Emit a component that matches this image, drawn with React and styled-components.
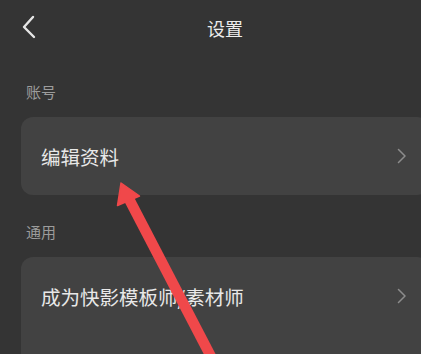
import React from 'react';
import styled, { createGlobalStyle } from 'styled-components';

const GlobalStyle = createGlobalStyle`
    html, body {
        margin: 0;
        padding: 0;
        background: #343434;
        overflow: hidden;
    }
    body {
        font-family: "Noto Sans CJK SC", "Noto Sans", sans-serif;
    }
`;

const Screen = styled.div`
    position: relative;
    width: 450px;
    height: 354px;
    overflow: hidden;
    background: #343434;
`;

const Header = styled.header`
    height: 55px;
    display: grid;
    grid-template-columns: 1fr auto 1fr;
    align-items: center;
`;

const BackButton = styled.div`
    display: flex;
    align-items: center;
    padding-left: 22px;
    margin-top: -1px;
`;

const Title = styled.h1`
    margin: 0;
    font-size: 18px;
    font-weight: 400;
    line-height: 1;
    color: #ececec;
`;

const SectionTitle = styled.div`
    height: 62px;
    box-sizing: border-box;
    padding: 0 26px 17px;
    display: flex;
    align-items: flex-end;
    font-size: 15px;
    line-height: 16px;
    color: #9c9c9c;
`;

const Card = styled.div`
    margin: 0 21px;
    min-height: ${(p) => p.$minHeight || 0}px;
    background: #424242;
    border-radius: 12px;
    overflow: hidden;
`;

const Row = styled.div`
    height: 78px;
    box-sizing: border-box;
    display: flex;
    align-items: center;
    justify-content: space-between;
    padding: 0 23px 0 20px;
    font-size: 19.5px;
    color: #e8e8e8;
`;

const Annotation = styled.svg`
    position: absolute;
    top: 0;
    left: 0;
    pointer-events: none;
`;

function ChevronLeft() {
    return (
        <svg width="14" height="24" viewBox="0 0 14 24">
            <polyline points="11,2 2,12 12,22" fill="none" stroke="#e6e6e6" strokeWidth="2.4" strokeLinecap="round" strokeLinejoin="round" />
        </svg>
    );
}

function ChevronRight() {
    return (
        <svg width="9" height="16" viewBox="0 0 9 16">
            <polyline points="1.5,1.5 8,8 1.5,14.5" fill="none" stroke="#8c8c8c" strokeWidth="1.5" strokeLinecap="round" strokeLinejoin="round" />
        </svg>
    );
}

function SettingRow({ label }) {
    return (
        <Row>
            <span>{label}</span>
            <ChevronRight />
        </Row>
    );
}

export default function App() {
    return (
        <>
            <GlobalStyle />
            <Screen>
                <Header>
                    <BackButton>
                        <ChevronLeft />
                    </BackButton>
                    <Title>设置</Title>
                    <div />
                </Header>

                <SectionTitle>账号</SectionTitle>
                <Card>
                    <SettingRow label="编辑资料" />
                </Card>

                <SectionTitle>通用</SectionTitle>
                <Card $minHeight={156}>
                    <SettingRow label="成为快影模板师/素材师" />
                </Card>

                <Annotation width="450" height="354" viewBox="0 0 450 354">
                    <line x1="129" y1="199" x2="219" y2="372" stroke="#f0484a" strokeWidth="10.5" />
                    <polygon points="121,183 117.5,205.5 139.5,196" fill="#f0484a" stroke="#f0484a" strokeWidth="1.5" strokeLinejoin="round" />
                </Annotation>
            </Screen>
        </>
    );
}
